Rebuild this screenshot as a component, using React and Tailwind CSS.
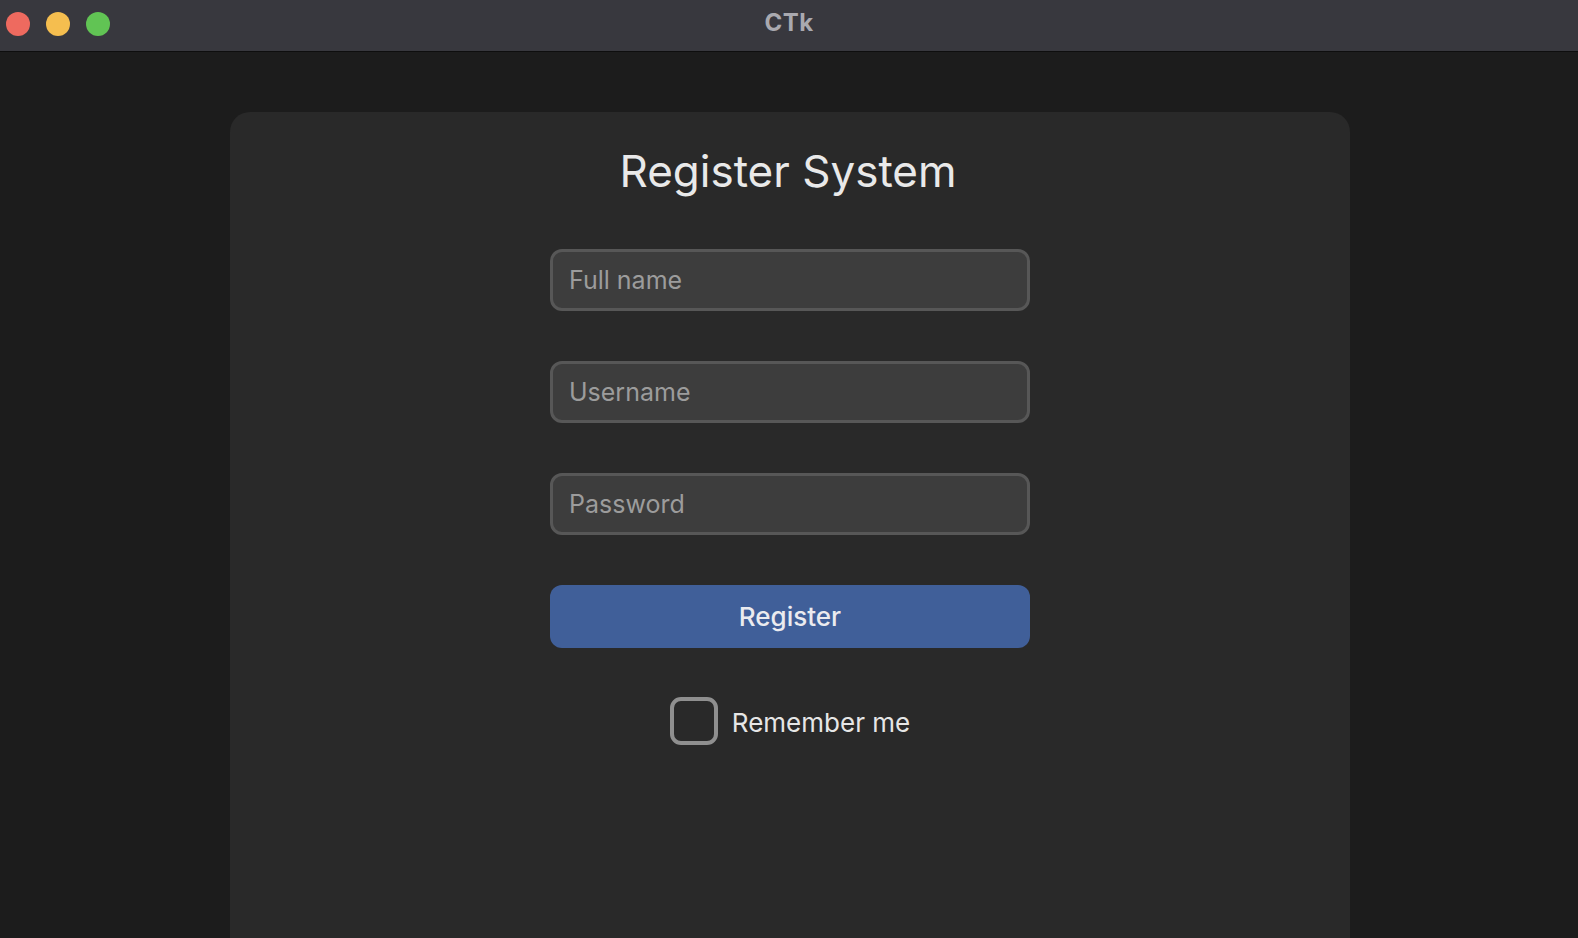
import React, { useState } from "react";

const Field = ({ placeholder, type = "text" }) => (
  <input
    type={type}
    placeholder={placeholder}
    className="w-[480px] h-[62px] rounded-[12px] border-[3px] border-[#575757] bg-[#3d3d3d] px-[16px] text-[25px] text-[#e8e8e8] placeholder:text-[#9c9c9c] outline-none"
  />
);

const App = () => {
  const [remember, setRemember] = useState(false);

  return (
    <div className="h-[938px] w-full flex flex-col overflow-hidden font-['Inter','Liberation_Sans',sans-serif]">
      {/* Title bar */}
      <div className="h-[52px] shrink-0 bg-[#38383e] border-b border-[#0e0e0e] flex items-center pb-[3px] relative">
        <div className="flex items-center gap-[16px] pl-[6px]">
          <span className="w-[24px] h-[24px] rounded-full bg-[#ee6a5f]" />
          <span className="w-[24px] h-[24px] rounded-full bg-[#f5be4f]" />
          <span className="w-[24px] h-[24px] rounded-full bg-[#61c454]" />
        </div>
        <div className="absolute inset-0 pb-[5px] flex items-center justify-center pointer-events-none">
          <span className="text-[24px] font-bold text-[#a9a9af] tracking-[0.5px]">CTk</span>
        </div>
      </div>

      {/* Window body */}
      <div className="flex-1 bg-[#1c1c1c] pt-[60px] pl-[230px]">
        <div className="w-[1120px] h-full rounded-t-[20px] bg-[#292929] flex flex-col items-center">
          <h1 className="pt-[33px] pr-[4px] text-[44px] leading-[53px] text-[#e9e9e9] font-normal">
            Register System
          </h1>

          <div className="mt-[51px] flex flex-col items-center gap-[50px]">
            <Field placeholder="Full name" />
            <Field placeholder="Username" />
            <Field placeholder="Password" type="password" />
            <button className="w-[480px] h-[63px] rounded-[12px] bg-[#405f99] text-[26px] font-medium text-[#ebebef]">
              Register
            </button>
            <label className="-mt-[1px] flex items-center gap-[14px] cursor-pointer">
              <span
                onClick={() => setRemember(!remember)}
                className="w-[48px] h-[48px] rounded-[11px] border-[4px] border-[#8f8f8f] bg-[#292929]"
              />
              <span className="pt-[3px] text-[26px] text-[#e6e6e6]">Remember me</span>
            </label>
          </div>
        </div>
      </div>
    </div>
  );
};

export default App;
